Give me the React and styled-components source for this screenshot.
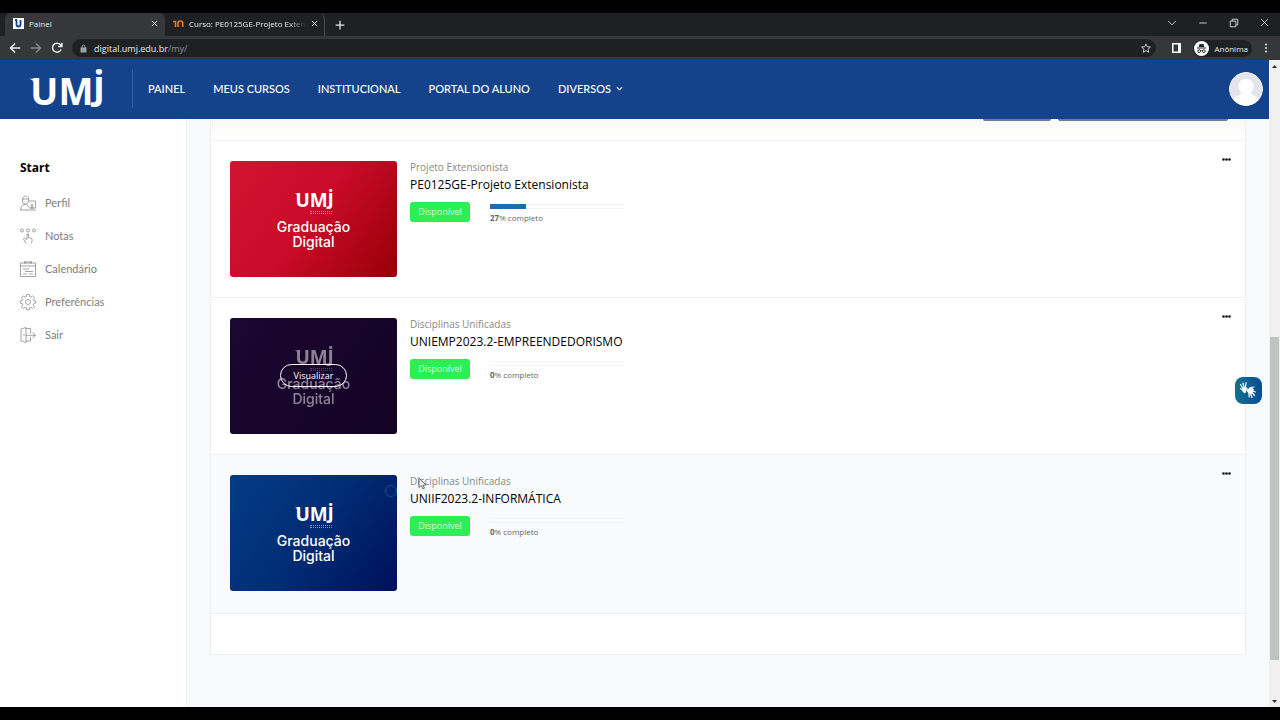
import React from 'react';
import styled, { createGlobalStyle } from 'styled-components';

const GlobalStyle = createGlobalStyle`
  * { box-sizing: border-box; }
  html, body, #root { height: 100%; }
  body {
    margin: 0;
    background: #000;
    font-family: "Open Sans", "Noto Sans", sans-serif;
    overflow: hidden;
  }
  button { font-family: inherit; border: 0; padding: 0; background: none; cursor: pointer; }
  a { text-decoration: none; color: inherit; }
  svg { display: block; flex: none; overflow: visible; }
`;

const Screen = styled.div`
  height: 100%;
  display: flex;
  flex-direction: column;
  padding: 13px 0;
`;

/* browser */
const TabBar = styled.div`
  height: 23px;
  flex: none;
  display: flex;
  background: #1e2123;
  padding-left: 5px;
  color: #e8eaed;
`;
const Tab = styled.div`
  width: 160px;
  display: flex;
  align-items: center;
  gap: 5px;
  padding: 0 6px 2px 8px;
  border-radius: 6px 6px 0 0;
  background: ${p => (p.$active ? '#35373a' : 'transparent')};
  border-right: 1px solid ${p => (p.$active ? 'transparent' : '#4a4d50')};
  font-size: 8px;
`;
const TabTitle = styled.span`
  flex: 1;
  overflow: hidden;
  white-space: nowrap;
  mask-image: ${p => (p.$fade ? 'linear-gradient(90deg, #000 85%, transparent)' : 'none')};
`;
const IconButton = styled.button`
  color: ${p => p.$color || '#e8eaed'};
  display: flex;
  align-items: center;
  justify-content: center;
`;
const NewTab = styled(IconButton)`
  width: 29px;
`;
const WindowButtons = styled.div`
  margin-left: auto;
  display: flex;
  align-items: center;
  gap: 21px;
  padding: 0 11px 4px 0;
`;
const Toolbar = styled.div`
  height: 24px;
  flex: none;
  display: flex;
  align-items: center;
  gap: 9px;
  padding: 0 9px;
  background: #35373a;
`;
const Address = styled.div`
  flex: 1;
  height: 18px;
  display: flex;
  align-items: center;
  gap: 7px;
  padding: 0 5px 0 8px;
  border-radius: 9px;
  background: #1e2123;
  color: #e8eaed;
  font-size: 9px;
`;
const Url = styled.span`
  flex: 1;
  span { color: #8f9398; }
`;
const SidePanel = styled(IconButton)`
  padding: 0 3px 0 7px;
`;
const Incognito = styled.div`
  height: 17px;
  display: flex;
  align-items: center;
  gap: 5px;
  padding: 0 4px 0 1px;
  border-radius: 9px;
  background: #1e2123;
  color: #e8eaed;
  font-size: 8px;
`;

/* site */
const Window = styled.div`
  flex: 1;
  min-height: 0;
  display: flex;
  background: #f6fafb;
`;
const Site = styled.div`
  flex: 1;
  display: flex;
  flex-direction: column;
`;
const Header = styled.header`
  height: 59px;
  flex: none;
  display: flex;
  align-items: center;
  padding: 0 6px 2px 29px;
  background: #14438c;
  color: #fff;
`;
const Nav = styled.nav`
  display: flex;
  align-items: center;
  gap: 28px;
  height: 39px;
  margin-left: 28px;
  padding-left: 15px;
  border-left: 1px solid #345d9d;
`;
const NavLink = styled.a`
  display: flex;
  align-items: center;
  gap: 5px;
  font-family: Lato, sans-serif;
  font-size: 11px;
  font-weight: 500;
`;
const Avatar = styled.button`
  margin-left: auto;
  border-radius: 50%;
  overflow: hidden;
`;
const Body = styled.div`
  flex: 1;
  min-height: 0;
  display: flex;
`;
const Sidebar = styled.aside`
  width: 187px;
  flex: none;
  padding: 39px 20px;
  background: #fff;
  border-right: 1px solid #f0f4f5;
`;
const SideTitle = styled.h2`
  margin: 0 0 8px;
  font-size: 12px;
  line-height: 20px;
`;
const SideLink = styled.a`
  display: flex;
  align-items: center;
  gap: 9px;
  height: 33px;
  color: #7d7d7d;
  font-family: Lato, sans-serif;
  font-size: 11px;
`;
const Main = styled.main`
  flex: 1;
  padding: 0 23px;
`;
const Card = styled.section`
  height: 536px;
  background: #fff;
  border: 1px solid #edf1f2;
  border-top: 0;
`;
const Filters = styled.div`
  height: 21px;
  display: flex;
  justify-content: flex-end;
  gap: 7px;
  padding-right: 17px;
  background: linear-gradient(#f8f8f5, #fff);
`;
const FilterEdge = styled.div`
  width: ${p => p.$width}px;
  height: 2px;
  background: #6a7d92;
  border-radius: 0 0 3px 3px;
`;
const Course = styled.article`
  min-height: 157px;
  display: flex;
  align-items: flex-start;
  gap: 13px;
  padding: 20px 14px 20px 19px;
  border-top: 1px solid #eff1f2;
  background: ${p => (p.$hover ? '#f8fafc' : '#fff')};
  &:last-child { padding-bottom: 22px; border-bottom: 1px solid #eff1f2; }
`;
const Cover = styled.div`
  position: relative;
  width: 167px;
  height: 116px;
  flex: none;
  border-radius: 3px;
  overflow: hidden;
  background: ${p => p.$fill};
  color: #fff;
`;
const CoverArt = styled.div`
  display: flex;
  flex-direction: column;
  align-items: center;
  padding-top: 27px;
  opacity: ${p => (p.$dim ? 0.5 : 1)};
  font-family: Inter, sans-serif;
  font-size: 14px;
  font-weight: 500;
  line-height: 15px;
  text-align: center;
`;
const CoverRule = styled.span`
  width: 22px;
  height: 3px;
  margin: 2px 0 5px 14px;
  border: 1px dotted currentColor;
  border-width: 1px 0;
  opacity: 0.5;
`;
const CoverRing = styled.span`
  position: absolute;
  right: 0;
  top: 10px;
  width: 12px;
  height: 12px;
  border: 1px solid #0c5b94;
  border-radius: 50%;
`;
const ViewButton = styled.button`
  position: absolute;
  left: 50px;
  top: 46px;
  width: 67px;
  height: 23px;
  border: 1px solid #fff;
  border-radius: 12px;
  color: #fff;
  font-size: 9px;
  font-weight: 500;
`;
const Info = styled.div`
  flex: 1;
`;
const Category = styled.div`
  color: #888;
  font-size: 10px;
  line-height: 12px;
`;
const CourseLink = styled.a`
  display: block;
  margin-top: 4px;
  color: #000;
  font-size: 12px;
  line-height: 16px;
`;
const Status = styled.div`
  display: flex;
  gap: 20px;
  margin-top: 9px;
`;
const Badge = styled.span`
  width: 60px;
  height: 20px;
  border-radius: 3px;
  background: #2bef54;
  color: #d9ffe2;
  font-size: 9px;
  line-height: 20px;
  text-align: center;
`;
const Progress = styled.div`
  width: 134px;
  color: #666;
  font-size: 8px;
  line-height: 12px;
`;
const Track = styled.div`
  height: 5px;
  margin: 2px 0 3px;
  border: 1px solid #f3f4f4;
  border-width: 1px 0;
  div { height: 5px; margin-top: -1px; background: #1f6bad; }
`;
const Menu = styled(IconButton)`
  height: 8px;
  margin-top: -6px;
`;
const Libras = styled.button`
  position: absolute;
  right: 18px;
  top: 377px;
  border-radius: 8px;
  background: linear-gradient(90deg, #12708f, #0b4c96);
  color: #fff;
`;
const Scrollbar = styled.div`
  width: 11px;
  display: flex;
  flex-direction: column;
  align-items: center;
  justify-content: space-between;
  padding: 5px 0 4px;
  background: #f1f1f1;
`;
const Thumb = styled.div`
  width: 9px;
  height: 323px;
  margin-top: 228px;
  background: #c1c3c1;
`;
const Cursor = styled.svg`
  position: absolute;
  left: 418px;
  top: 477px;
`;

const Logo = ({ width, height }) => (
  <svg width={width} height={height} viewBox="0 0 76 42" role="img" aria-label="UMJ" fill="currentColor">
    <path d="M0 11h8v5H5q-1-4-5-5z" />
    <text x="1" y="38" fontFamily="Open Sans" fontWeight="700" fontSize="38">UM<tspan dy="-7">j</tspan></text>
  </svg>
);

const Line = ({ size = 10, sw = 1.3, children, ...rest }) => (
  <svg width={size} height={size} viewBox="0 0 16 16" fill="none" stroke="currentColor" strokeWidth={sw} aria-hidden="true" {...rest}>
    {children}
  </svg>
);
const Close = ({ size = 7 }) => <Line size={size} sw="2.2"><path d="M2 2l12 12M14 2L2 14" /></Line>;

const sideItems = [
  ['Perfil', <><path d="M0 15h16M1 15v-2.500c0-2 2-3 4-3s3 1 4 3M2.500 5c0-5 6-5 6-1v2c0 4-6 4-6 0zM2.500 4h6M9 6h6.500v7H9M11 11l1-2 1 2-1 3z" /></>],
  ['Notas', <><circle cx="2" cy="2.500" r="1.500" /><circle cx="8" cy="2.500" r="1.500" /><circle cx="14" cy="2.500" r="1.500" /><path d="M6 15.500l-2.500-4.500 1-1 2.500 1.500V6h1.500v3.500l3.500 1v3l-1 2" /></>],
  ['Calendário', <><path d="M.5 2h15v13.500H.5zM.5 5h15M4 1h8M5 0v3M11 0v3M3 8h6M5 10.500h8M3 13h4M9 13h4" /></>],
  ['Preferências', <><circle cx="8" cy="8" r="2.500" /><path d="M6.800.5h2.400l.4 2.200 1.300.5 1.800-1.300 1.800 1.800-1.300 1.800.5 1.200 2 .3v2.200l-2 .4-.5 1.300 1.300 1.800-1.800 1.800-1.800-1.300-1.300.5-.4 2H6.800l-.4-2-1.300-.5-1.800 1.300-1.800-1.800 1.300-1.800-.5-1.300-2-.4V7l2-.3.5-1.200L1.500 3.700l1.800-1.800 1.800 1.300 1.300-.5z" /></>],
  ['Sair', <><path d="M1 2l5-1.500v15L1 14zM6 1.500h4.500v5M6 14h4.500v-4M4 7v2M6 8.300h9.500M12.500 5.500l3 2.800-3 2.700" /></>],
];

const courses = [
  { category: 'Projeto Extensionista', name: 'PE0125GE-Projeto Extensionista', done: 27, fill: 'linear-gradient(125deg, #d31431, #c90a28 50%, #970006)' },
  { category: 'Disciplinas Unificadas', name: 'UNIEMP2023.2-EMPREENDEDORISMO', done: 0, fill: 'linear-gradient(125deg, #1b0733, #130324)', view: true },
  { category: 'Disciplinas Unificadas', name: 'UNIIF2023.2-INFORMÁTICA', done: 0, fill: 'linear-gradient(125deg, #033c84, #012c75 50%, #00105c)', hover: true, ring: true },
];

const CourseRow = ({ course }) => (
  <Course $hover={course.hover}>
    <Cover $fill={course.fill}>
      <CoverArt $dim={course.view}>
        <Logo width={38} height={21} />
        <CoverRule />
        Graduação<br />Digital
      </CoverArt>
      {course.ring && <CoverRing />}
      {course.view && <ViewButton>Visualizar</ViewButton>}
    </Cover>
    <Info>
      <Category>{course.category}</Category>
      <CourseLink href="#">{course.name}</CourseLink>
      <Status>
        <Badge>Disponível</Badge>
        <Progress>
          <Track><div style={{ width: `${course.done}%` }} /></Track>
          <b>{course.done}</b>% completo
        </Progress>
      </Status>
    </Info>
    <Menu $color="#111" aria-label="Opções">
      <svg width="9" height="3" viewBox="0 0 9 3" fill="currentColor"><circle cx="1.500" cy="1.500" r="1.300" /><circle cx="4.500" cy="1.500" r="1.300" /><circle cx="7.500" cy="1.500" r="1.300" /></svg>
    </Menu>
  </Course>
);

const App = () => (
  <Screen>
    <GlobalStyle />
    <TabBar>
      <Tab $active>
        <svg width="11" height="11" viewBox="0 0 11 11"><path fill="#fff" d="M0 0h11v11H0z" /><path d="M2 2h2M3.500 2v4.500q0 2 2 2t2-2V2" fill="none" stroke="#14438c" strokeWidth="1.800" /></svg>
        <TabTitle>Painel</TabTitle>
        <IconButton aria-label="Fechar"><Close /></IconButton>
      </Tab>
      <Tab>
        <svg width="11" height="9" viewBox="0 0 11 9" fill="none" stroke="#e87a25" strokeWidth="1.600"><path d="M0 2.500h3M2.500 2v6M5 8V4q0-2 2.300-2T9.700 4v4" /></svg>
        <TabTitle $fade>Curso: PE0125GE-Projeto Extensi</TabTitle>
        <IconButton aria-label="Fechar"><Close /></IconButton>
      </Tab>
      <NewTab aria-label="Nova guia"><Line sw="2"><path d="M8 1v14M1 8h14" /></Line></NewTab>
      <WindowButtons>
        <IconButton aria-label="Pesquisar guias"><Line><path d="M2 5l6 6 6-6" /></Line></IconButton>
        <IconButton aria-label="Minimizar"><Line><path d="M2 8h12" /></Line></IconButton>
        <IconButton aria-label="Restaurar"><Line><path d="M2 5h9v9H2zM5 5V2h9v9h-3" /></Line></IconButton>
        <IconButton aria-label="Fechar janela"><Line size={9}><path d="M2 2l12 12M14 2L2 14" /></Line></IconButton>
      </WindowButtons>
    </TabBar>
    <Toolbar>
      <IconButton aria-label="Voltar"><Line size={12} sw="2"><path d="M15 8H2M8 2L2 8l6 6" /></Line></IconButton>
      <IconButton aria-label="Avançar" $color="#85888b"><Line size={12} sw="2"><path d="M1 8h13M8 2l6 6-6 6" /></Line></IconButton>
      <IconButton aria-label="Recarregar"><Line size={12} sw="2"><path d="M13.500 10a6 6 0 1 1-1-6.500L14 5M14.500 1v5h-5" /></Line></IconButton>
      <Address>
        <svg width="7" height="9" viewBox="0 0 7 9"><path d="M.5 3.500h6v5h-6z" fill="#9aa0a6" /><path d="M2 4V2.200q1.500-2.400 3 0V4" fill="none" stroke="#9aa0a6" /></svg>
        <Url>digital.umj.edu.br<span>/my/</span></Url>
        <IconButton aria-label="Favoritar"><Line><path d="M8 1.500l2 4.500 5 .5-3.800 3.300L12.400 15 8 12.200 3.600 15l1.200-5.200L1 6.500 6 6z" /></Line></IconButton>
      </Address>
      <SidePanel aria-label="Painel lateral"><svg width="9" height="10" viewBox="4 0 9 10"><path d="M4 0h9v10H4zM5.500 1.500v7H10v-7z" fill="#fff" fillRule="evenodd" /></svg></SidePanel>
      <Incognito>
        <svg width="15" height="15" viewBox="0 0 16 16"><circle cx="8" cy="8" r="8" fill="#fff" /><path d="M5 6.500L6 3l2 .5L10 3l1 3.500zM3 7h10v1H3z" fill="#222" /><path d="M7 10.500q1-.8 2 0" fill="none" stroke="#222" /><circle cx="5.500" cy="10.800" r="1.500" fill="none" stroke="#222" /><circle cx="10.500" cy="10.800" r="1.500" fill="none" stroke="#222" /></svg>
        Anônima
      </Incognito>
      <IconButton aria-label="Menu"><svg width="10" height="10" viewBox="0 0 10 10" fill="currentColor"><circle cx="5" cy="1.500" r="1" /><circle cx="5" cy="5" r="1" /><circle cx="5" cy="8.500" r="1" /></svg></IconButton>
    </Toolbar>
    <Window>
      <Site>
        <Header>
          <Logo width={75} height={41} />
          <Nav>
            <NavLink href="#">PAINEL</NavLink>
            <NavLink href="#">MEUS CURSOS</NavLink>
            <NavLink href="#">INSTITUCIONAL</NavLink>
            <NavLink href="#">PORTAL DO ALUNO</NavLink>
            <NavLink href="#">DIVERSOS <Line size={7} sw="2.500"><path d="M2 5l6 6 6-6" /></Line></NavLink>
          </Nav>
          <Avatar aria-label="Usuário">
            <svg width="34" height="34" viewBox="0 0 34 34"><circle cx="17" cy="17" r="16.500" fill="#e2e5e9" stroke="#fff" /><path d="M17 7c5 0 8 3.500 7.500 8-.2 3-1.500 5-3 6 1 3 7 2 8.500 7-7 7-19 7-26 0 1.500-5 7.500-4 8.500-7-1.500-1-2.800-3-3-6C9 10.500 12 7 17 7z" fill="#fff" /></svg>
          </Avatar>
        </Header>
        <Body>
          <Sidebar>
            <SideTitle>Start</SideTitle>
            {sideItems.map(([label, icon]) => (
              <SideLink href="#" key={label}><Line size={16} sw=".7">{icon}</Line>{label}</SideLink>
            ))}
          </Sidebar>
          <Main>
            <Card>
              <Filters><FilterEdge $width={68} /><FilterEdge $width={170} /></Filters>
              {courses.map(course => <CourseRow course={course} key={course.name} />)}
            </Card>
          </Main>
        </Body>
      </Site>
      <Scrollbar>
        <svg width="5" height="3" viewBox="0 0 5 3"><path d="M0 3L2.500 0 5 3z" fill="#333" /></svg>
        <Thumb />
        <svg width="5" height="3" viewBox="0 0 5 3"><path d="M0 0l2.500 3L5 0z" fill="#333" /></svg>
      </Scrollbar>
    </Window>
    <Libras aria-label="Libras">
      <svg width="27" height="27" viewBox="0 0 27 27" fill="none" stroke="currentColor" strokeWidth="1.200" strokeLinecap="round">
        <path d="M9 10.500L8 6M10.500 10l.6-4.500M8 11.500L5.500 7.500M7.500 13L5.500 11.500" />
        <path d="M8 11.500l2.500-1.500 2 2-1.500 1.500-1 2.500-2-1.500z" fill="currentColor" strokeWidth="1" />
        <path d="M17 14l3.500 1M17 15.500l2.500 3M15.500 16.500l1.500 4M14 16.500l.2 3.500M15 10.500l4-.5" />
        <path d="M13.500 12l3-1.500 2 2-1.500 3.500-2.500 1-2-2.500z" fill="currentColor" strokeWidth="1" />
      </svg>
    </Libras>
    <Cursor width="9" height="13" viewBox="0 0 9 13"><path d="M1 1v9.500l2.300-2L5 12l1.500-.8-1.600-3.200H8z" fill="#fff" stroke="#555" strokeWidth=".9" /></Cursor>
  </Screen>
);

export default App;
